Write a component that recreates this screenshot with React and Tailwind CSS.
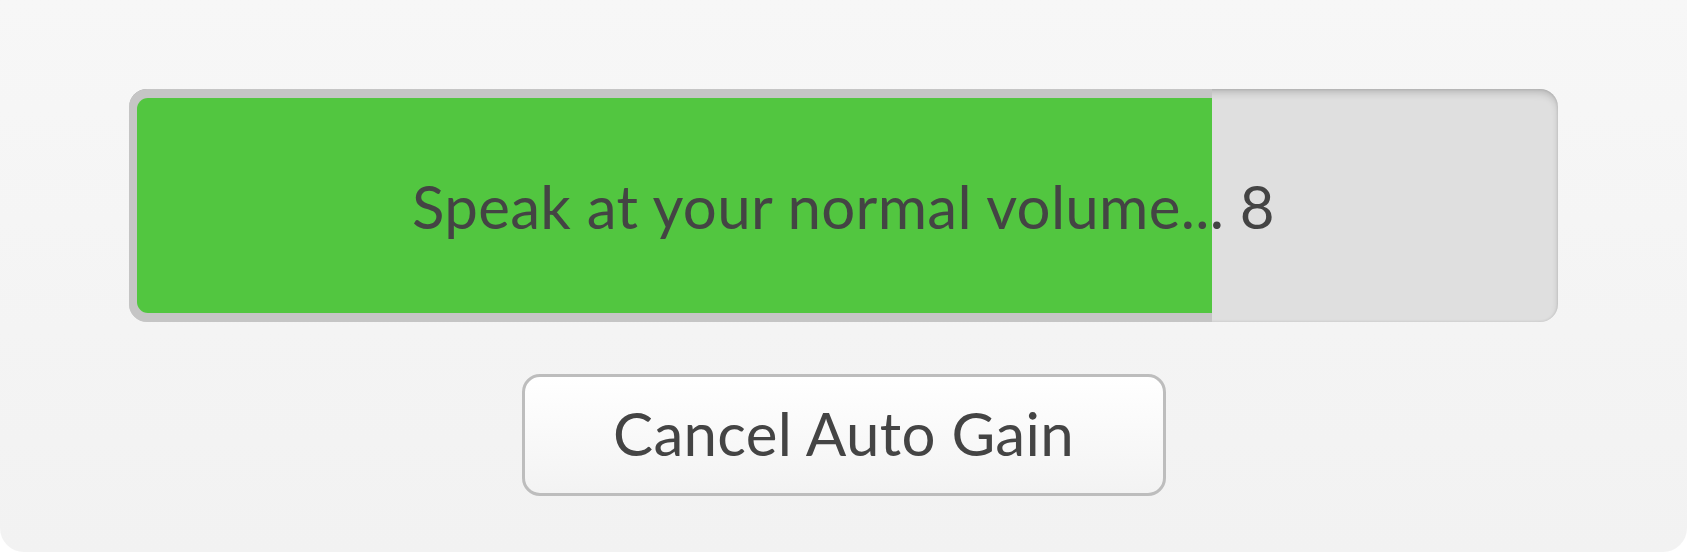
export default function App() {
  const level = 75.8;

  return (
    <div className="w-[1687px] h-[552px] bg-white">
      <div
        className="h-full rounded-b-[24px] bg-gradient-to-b from-[#f7f7f7] to-[#f2f2f2] flex flex-col items-center pt-[89px]"
        style={{ fontFamily: 'Lato, "Noto Sans", sans-serif' }}
      >
        {/* Meter */}
        <div className="w-[1429px] h-[233px] rounded-[18px] bg-[#dfdfdf] shadow-[inset_0_5px_8px_-2px_rgba(0,0,0,0.2),inset_0_0_3px_rgba(0,0,0,0.14)] grid overflow-hidden">
          <div className="col-start-1 row-start-1 h-full flex">
            <div
              className="h-full bg-[#c5c5c5] rounded-l-[18px] py-[9px] pl-[8px]"
              style={{ width: `${level}%` }}
            >
              <div className="h-full bg-[#52c640] rounded-l-[11px]"></div>
            </div>
          </div>
          <div className="col-start-1 row-start-1 flex items-center justify-center text-[60px] text-[#444444] leading-none tracking-[0.3px]">
            Speak at your normal volume... 8
          </div>
        </div>

        {/* Cancel */}
        <button className="mt-[52px] w-[644px] h-[122px] rounded-[18px] border-[3px] border-[#bdbdbd] bg-gradient-to-b from-white to-[#f3f3f3] text-[60px] text-[#444444] leading-none tracking-[0.3px] flex items-center justify-center pb-[4px]">
          Cancel Auto Gain
        </button>
      </div>
    </div>
  );
}
